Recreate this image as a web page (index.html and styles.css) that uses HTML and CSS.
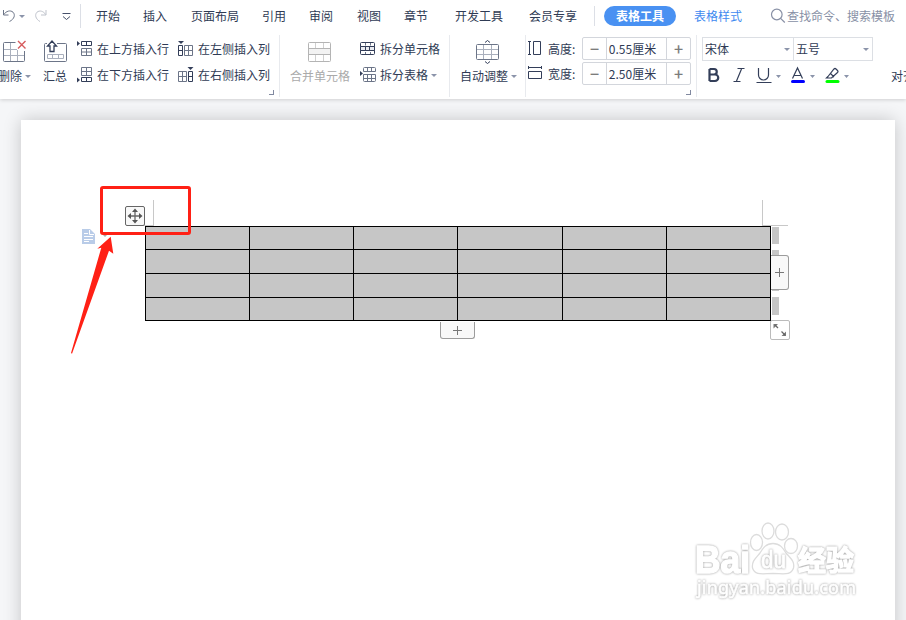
FILE: index.html
```
<!DOCTYPE html>
<html lang="zh-CN">
<head>
    <meta charset="UTF-8">
    <meta name="viewport" content="width=device-width, initial-scale=1.0">
    <title>表格工具</title>
    <link rel="stylesheet" href="styles.css">
</head>
<body>
    <header class="toolbar">
        <nav class="menu">
            <div class="quick">
                <svg width="14" height="14" viewBox="0 0 14 14"><path d="M1.5 1v5h5M1.800 5.600C4 2 8.500 0.800 11 3.200C13.500 5.700 12.500 10 7.500 12.500"/></svg>
                <i class="caret"></i>
                <svg class="redo" width="14" height="14" viewBox="0 0 14 14"><path d="M12 1v5H7M11.700 5.600C9.500 2 5.500 1 3 3.200C0.500 5.700 1.500 10 6 12.500"/></svg>
                <svg class="more" width="9" height="9" viewBox="0 0 9 9"><path d="M0.500 1.500h8M1 4.500l3.500 3 3.500-3"/></svg>
            </div>
            <div class="tabs">
                <span>开始</span>
                <span>插入</span>
                <span>页面布局</span>
                <span>引用</span>
                <span>审阅</span>
                <span>视图</span>
                <span>章节</span>
                <span>开发工具</span>
                <span>会员专享</span>
            </div>
            <div class="table-tabs">
                <span class="pill">表格工具</span>
                <span class="style-tab">表格样式</span>
            </div>
            <div class="search">
                <svg width="16" height="16" viewBox="0 0 16 16"><circle cx="5.800" cy="6.500" r="5.300"/><path d="M9.600 10.300l4.200 4.200"/></svg>
                <span>查找命令、搜索模板</span>
            </div>
        </nav>
        <div class="ribbon">
            <section class="group insert">
                <div class="big delete">
                    <svg width="24" height="24" viewBox="0 0 24 24"><path class="thin" d="M3 9.500h13M3 15.500h20M9.500 3v18M16.500 10v11"/><path d="M14.500 2.500h-11q-1 0-1 1v17q0 1 1 1h19q1 0 1-1V11"/><path class="red" d="M17 1l7.500 7.500M24.500 1L17 8.500"/></svg>
                    <span>删除<i class="caret"></i></span>
                </div>
                <div class="big summary">
                    <svg width="24" height="24" viewBox="0 0 24 24"><path d="M4 3.500H2.500q-1 0-1 1v16q0 1 1 1h20q1 0 1-1v-16q0-1-1-1H14"/><path class="thin" d="M4.500 14.500h16v4h-16zM9.500 14.500v4M15.500 14.500v4"/><path class="lift" d="M7 11.500V6H4.500L9 1l4.500 5H11v5.500z"/></svg>
                    <span>汇总</span>
                </div>
                <div class="lines rows">
                    <div class="line"><svg width="16" height="16" viewBox="0 0 16 16"><path class="solid" d="M0 0l3 2.500L0 5z"/><path class="dark" d="M4.500 0.500h10v4h-10zM9.500 0.500v4"/><path d="M4.500 7.500h10v7h-10zM4.500 11h10M9.500 7.500v7"/></svg>在上方插入行</div>
                    <div class="line"><svg width="16" height="16" viewBox="0 0 16 16"><path class="solid" d="M0 10.500l3 2.500-3 2.500z"/><path d="M4.500 0.500h10v8h-10zM4.500 4.500h10M9.500 0.500v8"/><path class="dark" d="M4.500 10.500h10v4h-10zM9.500 10.500v4"/></svg>在下方插入行</div>
                </div>
                <div class="lines cols">
                    <div class="line"><svg width="16" height="16" viewBox="0 0 16 16"><path class="solid" d="M0 0h6L3 3z"/><path class="dark" d="M0.500 4.500h4v10h-4zM0.500 9.500h4"/><path d="M6.500 4.500h8v10h-8zM6.500 9.500h8M10.500 4.500v10"/></svg>在左侧插入列</div>
                    <div class="line"><svg width="16" height="16" viewBox="0 0 16 16"><path class="solid" d="M9.500 0h6l-3 3z"/><path class="dark" d="M10.500 4.500h4v10h-4zM10.500 9.500h4"/><path d="M0.500 4.500h8v10h-8zM0.500 9.500h8M4.500 4.500v10"/></svg>在右侧插入列</div>
                </div>
                <i class="launcher"></i>
            </section>
            <section class="group merge">
                <div class="big disabled">
                    <svg width="24" height="24" viewBox="0 0 24 24"><rect x="0.500" y="2.500" width="22" height="19" rx="1"/><path class="thin" d="M7.500 3v5M15.500 3v5M7.500 15v6M15.500 15v6"/><rect class="band" x="0.500" y="8.500" width="22" height="6"/></svg>
                    <span>合并单元格</span>
                </div>
                <div class="lines">
                    <div class="line"><svg width="16" height="16" viewBox="0 0 16 16"><path d="M5.500 1.500v3M10.500 1.500v3M5.500 11v3M10.500 11v3"/><rect class="dark" x="0.500" y="1.500" width="14" height="12" rx="1"/><path class="dark split" d="M0.500 5.500h14v4h-14zM5.500 5.500v4M9.500 5.500v4"/></svg>拆分单元格</div>
                    <div class="line"><svg width="16" height="16" viewBox="0 0 16 16"><path class="solid" d="M0 4l3 2.500L0 9z"/><path d="M3.500 4.500v-3q0-1 1-1h10q1 0 1 1v3zM7.500 0.500v4M11.500 0.500v4M3.500 7.500h12v6q0 1-1 1h-10q-1 0-1-1zM3.500 11.500h12M7.500 7.500v7M11.500 7.500v7"/></svg>拆分表格<i class="caret"></i></div>
                </div>
            </section>
            <section class="group adjust">
                <div class="big">
                    <svg width="24" height="24" viewBox="0 0 24 24"><path class="thin" d="M1 9.500h21M1 14.500h21M7.500 5v14M15.500 5v14"/><rect x="0.500" y="4.500" width="22" height="15" rx="1"/><path class="arrows" d="M9 2.500L11.500 0.500l2.500 2M9 21.500l2.500 2 2.500-2"/></svg>
                    <span>自动调整<i class="caret"></i></span>
                </div>
            </section>
            <section class="group size">
                <div class="size-row">
                    <svg width="14" height="15" viewBox="0 0 14 15"><path class="dark" d="M0 0.500h3M0 13.500h3M1.500 0.500v13M5.500 0.500h7v13h-7z"/></svg>
                    <label>高度:</label>
                    <div class="stepper"><b>−</b><span>0.55厘米</span><b>+</b></div>
                </div>
                <div class="size-row">
                    <svg width="14" height="15" viewBox="0 0 14 15"><path class="dark" d="M0.500 0v3M13.500 0v3M0.500 1.500h13M0.500 5.500h13v7h-13z"/></svg>
                    <label>宽度:</label>
                    <div class="stepper"><b>−</b><span>2.50厘米</span><b>+</b></div>
                </div>
                <i class="launcher"></i>
            </section>
            <section class="group font">
                <div class="combos">
                    <div class="combo">宋体<i class="caret"></i></div>
                    <div class="combo">五号<i class="caret"></i></div>
                </div>
                <div class="format">
                    <svg width="165" height="22" viewBox="0 0 165 22">
                        <path class="bold" d="M3.500 4v12M3.500 4h4.500a2.700 2.700 0 0 1 0 5.500H3.500h5.500a3.200 3.200 0 0 1 0 6.500H3.500"/>
                        <path d="M31.500 3.500h7M27.500 16.500h7M35.500 4L30.500 16"/>
                        <path d="M52.500 3v7a5 5 0 0 0 10 0V3M50.500 17.500h15"/>
                        <path d="M86.500 13.500l5-10.500 5 10.500M88.500 10.500h6"/>
                        <path class="blue" d="M86.500 16.500h11"/>
                        <path d="M122 11.500l6-7.500q1-1 2 0l1.500 1.500q1 1 0 2L125.500 13h-5zM124.500 8.500l3.500 3.500"/>
                        <path class="green" d="M121 16.500h11"/>
                        <path class="tri" d="M70 10h5l-2.500 3zM104 10h5l-2.500 3zM138 10h5l-2.500 3z"/>
                    </svg>
                </div>
            </section>
            <section class="align">对齐方式</section>
        </div>
    </header>
    <main class="workspace">
        <div class="page">
            <div class="table">
                <i></i><i></i><i></i><i></i><i></i><i></i>
                <i></i><i></i><i></i><i></i><i></i><i></i>
                <i></i><i></i><i></i><i></i><i></i><i></i>
                <i></i><i></i><i></i><i></i><i></i><i></i>
            </div>
            <div class="margin-corner left"></div>
            <div class="margin-corner right"></div>
            <div class="row-marks"><i></i><i></i><i></i><i></i></div>
            <div class="add-column"><svg width="9" height="9" viewBox="0 0 9 9"><path d="M0 4.500h9M4.500 0v9"/></svg></div>
            <div class="add-row"><svg width="9" height="9" viewBox="0 0 9 9"><path d="M0 4.500h9M4.500 0v9"/></svg></div>
            <div class="resize"><svg width="14" height="14" viewBox="0 0 14 14"><path d="M0.500 1h4.500L0.500 5.500zM13 13H8.500L13 8.500z"/><path class="stem" d="M2 2l3 3M12 12L8.500 8.500"/></svg></div>
            <div class="move"><svg width="16" height="16" viewBox="0 0 16 16"><path class="stem" d="M8 2v12M2 8h12"/><path d="M8 0.500l3 3.500H5zM8 15.500l3-3.500H5zM0.500 8L4 5v6zM15.500 8L12 5v6z"/></svg></div>
            <svg class="note" width="13" height="15" viewBox="0 0 13 15"><path class="sheet" d="M0 0h8l5 5v10H0z"/><path class="text" d="M7.500 1v4.500H12M2 4.500h4M2 7.500h9M2 10.500h9M2 12.500h5"/></svg>
            <i class="note-caret"></i>
            <div class="highlight"></div>
            <svg class="pointer" width="46" height="120" viewBox="0 0 46 120"><path d="M41.700 1.700L44.300 18.700 40 15.700 3 118.700 2 118 32.300 12.700 28.300 13.700z"/></svg>
            <svg class="watermark" width="180" height="90" viewBox="0 0 180 90">
                <ellipse cx="65.500" cy="22.500" rx="6" ry="8"/>
                <ellipse cx="77" cy="11" rx="6" ry="8"/>
                <ellipse cx="91" cy="12" rx="6.500" ry="8"/>
                <ellipse cx="100" cy="26" rx="6.500" ry="7.500"/>
                <path d="M82 23.500C89 23.500 92 28 95 33C99 38 104 41 102.500 48C100 56 92 53.500 82 53.500C72 53.500 64 56 61.500 48C60.500 41 65 38 69 33C72 28 75 23.500 82 23.500z"/>
                <text class="brand" x="4" y="53" textLength="55" lengthAdjust="spacingAndGlyphs">Bai</text>
                <text class="du" x="70" y="48" textLength="25" lengthAdjust="spacingAndGlyphs">du</text>
                <text class="cn" x="107" y="51" textLength="56">经验</text>
                <text class="site" x="6" y="74" textLength="159">jingyan.baidu.com</text>
            </svg>
        </div>
    </main>
</body>
</html>
```
FILE: styles.css
```
* {
    box-sizing: border-box;
}
body {
    margin: 0;
    height: 620px;
    overflow: hidden;
    display: flex;
    flex-direction: column;
    background-color: #f5f6f8;
    color: #2f3b55;
    font-family: "Noto Sans CJK SC", sans-serif;
    font-size: 12px;
    line-height: 16px;
    white-space: nowrap;
}
svg {
    display: block;
    flex: none;
    fill: none;
    stroke: #6c7588;
    overflow: visible;
}
.toolbar {
    height: 99px;
    background-color: #fff;
    box-shadow: 0 1px 4px rgba(0,0,0,0.16);
    flex: none;
    z-index: 1;
}
.caret {
    display: inline-block;
    flex: none;
    border: 3px solid transparent;
    border-top-color: #8b94aa;
    border-bottom: 0;
}

/* Menu */
.menu {
    display: flex;
    height: 32px;
    align-items: center;
}
.quick {
    display: flex;
    align-items: center;
    width: 81px;
    height: 24px;
    padding-left: 2px;
    border-right: 1px solid #dcdfe6;
}
.quick .caret {
    margin: 0 9px 0 3px;
}
.quick .redo {
    stroke: #bfc3cc;
}
.quick .more {
    margin-left: 14px;
    stroke: #46506a;
}
.tabs {
    display: grid;
    grid-template-columns: 47px 48px 71px 47px 48px 47px 51px 74px 65px;
    padding-left: 15px;
}
.table-tabs {
    display: flex;
    align-items: center;
    gap: 18px;
    height: 20px;
    padding-left: 9px;
    border-left: 1px solid #dcdfe6;
    color: #3f8af0;
}
.pill {
    width: 72px;
    height: 20px;
    line-height: 20px;
    border-radius: 10px;
    background-color: #4991f2;
    color: #fff;
    font-weight: bold;
    text-align: center;
}
.search {
    display: flex;
    align-items: center;
    margin-left: 29px;
    color: #8890a5;
}
.search svg {
    stroke: #8890a5;
    stroke-width: 1.2;
}

/* Ribbon */
.ribbon {
    display: flex;
    height: 67px;
}
.group {
    display: flex;
    flex: none;
    position: relative;
    height: 62px;
    margin-top: 3px;
    padding-top: 5px;
    border-right: 1px solid #e8eaee;
}
.launcher {
    position: absolute;
    right: 5px;
    bottom: 2px;
    width: 5px;
    height: 5px;
    border-right: 1px solid #8189a0;
    border-bottom: 1px solid #8189a0;
}
.big {
    display: flex;
    flex-direction: column;
    align-items: center;
    gap: 4px;
}
.big .caret {
    margin: 0 0 3px 3px;
}
.thin {
    stroke: #aab0bd;
}
.red {
    stroke: #d65a5c;
    stroke-width: 1.4;
}
.lift {
    fill: #fff;
    stroke: #333e59;
    stroke-width: 1.3;
}
.dark, .arrows {
    stroke: #333e59;
}
.split {
    fill: #e9ebf0;
}
.solid {
    fill: #333e59;
    stroke: none;
}
.lines {
    display: flex;
    flex-direction: column;
    gap: 10px;
    padding-top: 1px;
}
.line {
    display: flex;
    align-items: center;
    gap: 4px;
    height: 16px;
}
.insert {
    width: 280px;
}
.delete {
    width: 33px;
    margin-left: -2px;
    align-items: flex-start;
}
.delete svg {
    margin-left: 3px;
}
.summary {
    width: 24px;
    margin-left: 12px;
}
.rows {
    margin-left: 10px;
}
.cols {
    margin-left: 9px;
}
.merge {
    width: 170px;
    padding-left: 10px;
}
.merge .lines {
    margin-left: 10px;
}
.merge .lines .caret {
    margin-left: -1px;
}
.disabled {
    color: #aaa;
}
.disabled svg {
    stroke: #b4b4b4;
}
.disabled .thin {
    stroke: #d0d0d0;
}
.band {
    fill: #f3f3f3;
}
.adjust {
    width: 76px;
    padding-left: 10px;
}
.adjust svg {
    margin-right: 2px;
}
.size {
    width: 171px;
    flex-direction: column;
    gap: 2px;
    padding-top: 2px;
    padding-left: 2px;
}
.size-row {
    display: flex;
    align-items: center;
}
.size-row label {
    width: 34px;
    margin-left: 6px;
}
.stepper {
    display: grid;
    grid-template-columns: 23px 61px 23px;
    width: 109px;
    height: 23px;
    border: 1px solid #d3d6dc;
    border-radius: 2px;
    line-height: 21px;
    text-align: center;
}
.stepper span {
    border: 1px solid #d3d6dc;
    border-width: 0 1px;
    padding-right: 8px;
}
.stepper b {
    color: #7c7c7c;
    font-size: 16px;
    font-weight: 500;
    line-height: 20px;
}
.font {
    width: 186px;
    padding: 2px 0 0 5px;
    border: 0;
    flex-direction: column;
}
.combos {
    display: grid;
    grid-template-columns: 92px 79px;
    width: 171px;
}
.combo {
    display: flex;
    align-items: center;
    justify-content: space-between;
    height: 24px;
    padding: 0 3px 0 2px;
    border: 1px solid #dcdfe4;
}
.combo + .combo {
    margin-left: -1px;
}
.format {
    padding: 4px 0 0 4px;
}
.format svg {
    stroke: #333e59;
    stroke-width: 1.2;
}
.format .bold {
    stroke-width: 2.2;
}
.format .blue {
    stroke: #00f;
    stroke-width: 3;
    stroke-linecap: round;
}
.format .green {
    stroke: #0f0;
    stroke-width: 3;
    stroke-linecap: round;
}
.format .tri {
    fill: #8b94aa;
    stroke: none;
}
.align {
    padding: 36px 0 0 8px;
}

/* Document */
.workspace {
    flex: 1;
    padding: 21px 11px 0 21px;
}
.page {
    position: relative;
    height: 520px;
    padding: 106px 0 0 124px;
    background-color: #fff;
    box-shadow: 0 0 17px rgba(0,0,0,0.2);
}
.table {
    display: grid;
    grid-template-columns: 103px 103px 103px 104px 103px 103px;
    grid-template-rows: 22px 23px 23px 22px;
    gap: 1px;
    width: 626px;
    padding: 1px;
    background-color: #000;
}
.table i {
    background-color: #c6c6c6;
}
.margin-corner {
    position: absolute;
    top: 80px;
    height: 26px;
    border-bottom: 1px solid #c8c8c8;
}
.margin-corner.left {
    left: 107px;
    width: 26px;
    border-right: 1px solid #c8c8c8;
}
.margin-corner.right {
    left: 741px;
    width: 26px;
    border-left: 1px solid #c8c8c8;
}
.row-marks {
    position: absolute;
    left: 751px;
    top: 107px;
    display: grid;
    grid-template-rows: 17px 18px 17px 18px;
    gap: 6px;
    width: 7px;
}
.row-marks i {
    background-color: #c6c6c6;
}
.add-column, .add-row, .resize, .move {
    position: absolute;
    display: flex;
    align-items: center;
    justify-content: center;
    background-color: #f8f8f8;
    border: 1px solid #9c9c9c;
}
.add-column svg, .add-row svg {
    stroke: #777;
}
.add-column {
    left: 750px;
    top: 135px;
    width: 18px;
    height: 35px;
    border-left: 0;
    border-radius: 0 3px 3px 0;
}
.add-row {
    left: 419px;
    top: 202px;
    width: 35px;
    height: 17px;
    border-top: 0;
    border-radius: 0 0 3px 3px;
}
.resize {
    left: 749px;
    top: 200px;
    width: 20px;
    height: 20px;
    border-color: #bbb;
    border-radius: 2px;
    background-color: #fff;
}
.resize path, .move path {
    fill: #555;
    stroke: none;
}
.resize path {
    fill: #777;
}
.resize .stem, .move .stem {
    stroke: #666;
    stroke-width: 1.3;
}
.move {
    left: 104px;
    top: 86px;
    width: 20px;
    height: 20px;
    border-color: #666;
    border-radius: 2px;
}
.note {
    position: absolute;
    left: 61px;
    top: 109px;
}
.note .sheet {
    fill: #b9cce8;
    stroke: none;
}
.note .text {
    stroke: #fff;
}
.note-caret {
    position: absolute;
    left: 81px;
    top: 114px;
    border: 3px solid transparent;
    border-top-color: #aaa;
    border-bottom: 0;
}
.highlight {
    position: absolute;
    left: 79px;
    top: 66px;
    width: 91px;
    height: 49px;
    border: 3px solid #ff2015;
    border-radius: 3px;
}
.pointer {
    position: absolute;
    left: 48px;
    top: 115px;
}
.pointer path {
    fill: #ff2015;
    stroke: none;
}

/* Outlined logo in the page corner */
.watermark {
    position: absolute;
    left: 670px;
    top: 400px;
    fill: #fff;
    stroke: #dcdcdc;
    stroke-width: 1.3;
    font-family: "Liberation Sans", sans-serif;
}
.watermark text {
    stroke: #fff;
    stroke-width: 1.5;
    stroke-linejoin: round;
    filter: drop-shadow(0 0 0.8px #999);
}
.brand {
    font-size: 38px;
    font-weight: bold;
}
.watermark .du {
    font-size: 23px;
    stroke-width: 0.8;
}
.cn {
    font-family: "Noto Sans CJK SC", sans-serif;
    font-size: 28px;
    font-weight: bold;
}
.watermark .site {
    font-family: "Noto Sans", sans-serif;
    font-size: 18px;
    stroke-width: 0.6;
}
```
